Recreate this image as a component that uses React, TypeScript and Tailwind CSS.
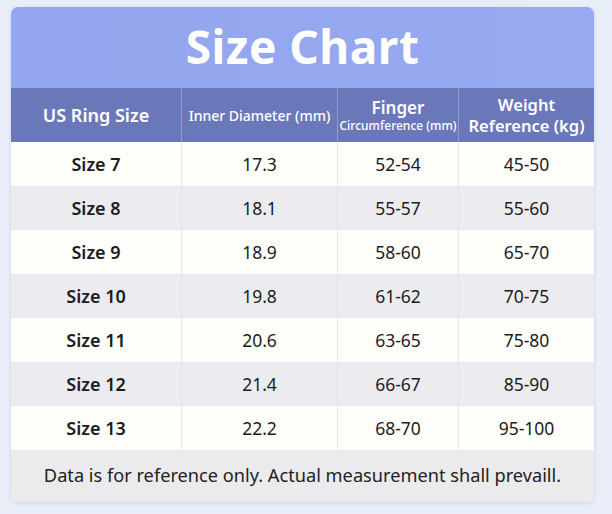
const rows = [
  ['Size 7', '17.3', '52-54', '45-50'],
  ['Size 8', '18.1', '55-57', '55-60'],
  ['Size 9', '18.9', '58-60', '65-70'],
  ['Size 10', '19.8', '61-62', '70-75'],
  ['Size 11', '20.6', '63-65', '75-80'],
  ['Size 12', '21.4', '66-67', '85-90'],
  ['Size 13', '22.2', '68-70', '95-100'],
];

const cols = 'grid grid-cols-[170px_156px_121px_136px]';

export default function App() {
  return (
    <div
      className="w-[612px] h-[514px] bg-[#e9eef9] pt-[7px] pl-[11px]"
      style={{ fontFamily: '"Noto Sans", "Open Sans", sans-serif' }}
    >
      <div className="w-[583px] rounded-[7px] overflow-hidden shadow-[0_1px_4px_rgba(80,90,140,0.18)] bg-[#fdfdfa]">
        {/* Title */}
        <div className="h-[81px] bg-gradient-to-r from-[#93a5ee] to-[#97a9ef] flex items-center justify-center">
          <h1 className="text-white text-[46px] font-bold leading-none tracking-[0.5px] pb-[4px]">Size Chart</h1>
        </div>

        {/* Header */}
        <div className={`${cols} h-[54px] bg-[#6a78ba] text-white`}>
          <div className="flex items-center justify-center text-[18px] font-semibold">US Ring Size</div>
          <div className="flex items-center justify-center text-[14px] font-medium border-l border-[#8f9bd0]">
            Inner Diameter (mm)
          </div>
          <div className="flex flex-col items-center justify-center border-l border-[#8f9bd0] leading-tight">
            <span className="text-[17px] font-semibold">Finger</span>
            <span className="text-[12px] font-medium">Circumference (mm)</span>
          </div>
          <div className="flex flex-col items-center justify-center border-l border-[#8f9bd0] text-[16.5px] font-semibold leading-[21px]">
            <span>Weight</span>
            <span>Reference (kg)</span>
          </div>
        </div>

        {/* Rows */}
        {rows.map((r, i) => (
          <div
            key={r[0]}
            className={`${cols} h-[44px] text-[#1c1c1c] text-[17.5px] ${i % 2 ? 'bg-[#ececf0]' : 'bg-[#fdfdfa]'}`}
          >
            <div className="flex items-center justify-center font-semibold text-[18px]">{r[0]}</div>
            <div className="flex items-center justify-center border-l border-[#e6e6e8]">{r[1]}</div>
            <div className="flex items-center justify-center border-l border-[#e6e6e8]">{r[2]}</div>
            <div className="flex items-center justify-center border-l border-[#e6e6e8]">{r[3]}</div>
          </div>
        ))}

        {/* Footer */}
        <div className="h-[52px] bg-[#ebebee] flex items-center justify-center text-[18.2px] text-[#222]">
          Data is for reference only. Actual measurement shall prevaill.
        </div>
      </div>
    </div>
  );
}
